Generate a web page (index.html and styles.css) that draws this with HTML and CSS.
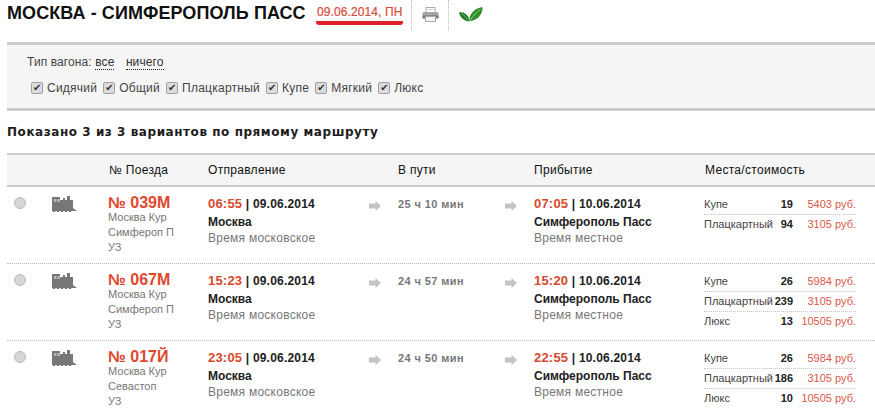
FILE: index.html
```html
<!DOCTYPE html>
<html lang="ru">
<head>
<meta charset="utf-8">
<title>Москва - Симферополь Пасс</title>
<link rel="stylesheet" href="styles.css">
</head>
<body>
<header class="head">
  <h1 class="title">МОСКВА - СИМФЕРОПОЛЬ ПАСС</h1>
  <span class="date">09.06.2014, ПН</span>
  <span class="tool tool-print">
    <svg width="17" height="15" viewBox="0 0 17 15"><rect x="4" y="0.5" width="9" height="5" fill="#fff" stroke="#aaa"/><path d="M5.500 2.500h6" stroke="#ccc"/><rect x="0.500" y="5" width="16" height="6" rx="1.500" fill="#a5a5a5"/><rect x="0.500" y="8.500" width="16" height="3" fill="#777"/><rect x="3.500" y="9.500" width="10" height="5" fill="#f4f4f4" stroke="#aaa"/></svg>
  </span>
  <span class="tool tool-leaf">
    <svg width="24" height="15" viewBox="0 0 24 15"><path d="M10.500 14.500C6 14.500 1 11 0 5.500 5 4.500 10 8 10.500 14.500Z" fill="#1f7d22"/><path d="M10.500 14C10 7 15 1.500 23.500 0 24 7 18 14 10.500 14Z" fill="#2c8f2b"/><path d="M11.500 13C14 8.500 17.500 5 21.500 2.500" stroke="#a5d98f" fill="none" stroke-width="0.800"/><path d="M9.500 13.500C7.500 10.500 5 8 2.500 6.800" stroke="#8fca7c" fill="none" stroke-width="0.700"/></svg>
  </span>
</header>

<section class="filter">
  <div class="filter-line">Тип вагона: <a class="dotted">все</a> <a class="dotted second">ничего</a></div>
  <div class="checks">
    <label class="check"><input type="checkbox" checked>Сидячий</label>
    <label class="check"><input type="checkbox" checked>Общий</label>
    <label class="check"><input type="checkbox" checked>Плацкартный</label>
    <label class="check"><input type="checkbox" checked>Купе</label>
    <label class="check"><input type="checkbox" checked>Мягкий</label>
    <label class="check"><input type="checkbox" checked>Люкс</label>
  </div>
</section>

<h2 class="shown">Показано 3 из 3 вариантов по прямому маршруту</h2>

<section class="table">
  <div class="row thead">
    <div></div><div></div>
    <div class="th-train">№ Поезда</div>
    <div>Отправление</div>
    <div></div>
    <div>В пути</div>
    <div></div>
    <div>Прибытие</div>
    <div class="th-seats">Места/стоимость</div>
  </div>

  <div class="row item">
    <div><span class="radio"></span></div>
    <div><svg class="loco" viewBox="0 0 26 16"><use href="#loco"/></svg></div>
    <div class="train"><div class="num">№ 039М</div><div>Москва Кур</div><div>Симфероп П</div><div>УЗ</div></div>
    <div class="point"><div class="when"><b>06:55</b> | 09.06.2014</div><div class="place">Москва</div><div class="tz">Время московское</div></div>
    <div><span class="arrow"></span></div>
    <div class="dur">25 ч 10 мин</div>
    <div><span class="arrow"></span></div>
    <div class="point"><div class="when"><b>07:05</b> | 10.06.2014</div><div class="place">Симферополь Пасс</div><div class="tz">Время местное</div></div>
    <div class="seats">
      <div class="seat"><span>Купе</span><b>19</b><i>5403 руб.</i></div>
      <div class="seat"><span>Плацкартный</span><b>94</b><i>3105 руб.</i></div>
    </div>
  </div>

  <div class="row item">
    <div><span class="radio"></span></div>
    <div><svg class="loco" viewBox="0 0 26 16"><use href="#loco"/></svg></div>
    <div class="train"><div class="num">№ 067М</div><div>Москва Кур</div><div>Симфероп П</div><div>УЗ</div></div>
    <div class="point"><div class="when"><b>15:23</b> | 09.06.2014</div><div class="place">Москва</div><div class="tz">Время московское</div></div>
    <div><span class="arrow"></span></div>
    <div class="dur">24 ч 57 мин</div>
    <div><span class="arrow"></span></div>
    <div class="point"><div class="when"><b>15:20</b> | 10.06.2014</div><div class="place">Симферополь Пасс</div><div class="tz">Время местное</div></div>
    <div class="seats">
      <div class="seat"><span>Купе</span><b>26</b><i>5984 руб.</i></div>
      <div class="seat"><span>Плацкартный</span><b>239</b><i>3105 руб.</i></div>
      <div class="seat"><span>Люкс</span><b>13</b><i>10505 руб.</i></div>
    </div>
  </div>

  <div class="row item">
    <div><span class="radio"></span></div>
    <div><svg class="loco" viewBox="0 0 26 16"><use href="#loco"/></svg></div>
    <div class="train"><div class="num">№ 017Й</div><div>Москва Кур</div><div>Севастоп</div><div>УЗ</div></div>
    <div class="point"><div class="when"><b>23:05</b> | 09.06.2014</div><div class="place">Москва</div><div class="tz">Время московское</div></div>
    <div><span class="arrow"></span></div>
    <div class="dur">24 ч 50 мин</div>
    <div><span class="arrow"></span></div>
    <div class="point"><div class="when"><b>22:55</b> | 10.06.2014</div><div class="place">Симферополь Пасс</div><div class="tz">Время местное</div></div>
    <div class="seats">
      <div class="seat"><span>Купе</span><b>26</b><i>5984 руб.</i></div>
      <div class="seat"><span>Плацкартный</span><b>186</b><i>3105 руб.</i></div>
      <div class="seat"><span>Люкс</span><b>10</b><i>10505 руб.</i></div>
    </div>
  </div>
</section>

<svg class="defs" width="0" height="0">
  <symbol id="loco" viewBox="0 0 26 16">
    <path d="M0 1h8v3h3V2h2v2h2V0h3v4h3v8l4 3H0Z" fill="#777"/>
    <path d="M2 3h2.500v3H2ZM5.500 3H8v3H5.500Z" fill="#b5b5b5"/>
    <path d="M2 12v4M6 12v4M10 12v4M14 12v4M18 12v4" stroke="#777" stroke-width="2.400"/>
  </symbol>
</svg>
</body>
</html>
```
FILE: styles.css
```css
html, body {
  margin: 0;
  padding: 0;
  background: #fff;
}
body {
  width: 875px;
  height: 415px;
  overflow: hidden;
  padding-left: 7px;
  box-sizing: border-box;
  font-family: "Liberation Sans", Arial, sans-serif;
  font-size: 12px;
  color: #222;
}
.head {
  display: flex;
  align-items: flex-start;
  height: 42px;
}
.title {
  margin: 0;
  padding-top: 3px;
  width: 309px;
  flex: none;
  font-size: 18px;
  line-height: 20px;
  font-weight: bold;
  letter-spacing: 0.08px;
  color: #111;
  white-space: nowrap;
}
.date {
  width: 87px;
  flex: none;
  height: 25px;
  box-sizing: border-box;
  padding: 5px 0 0 1px;
  font-size: 12px;
  line-height: 14px;
  letter-spacing: 0.1px;
  color: #d84a3a;
  -webkit-text-stroke: 0.2px #d84a3a;
  border-bottom: 4px solid #e01f2d;
  border-radius: 3px;
  white-space: nowrap;
}
.tool {
  flex: none;
  height: 30px;
  display: flex;
  justify-content: center;
  align-items: flex-start;
  border-left: 1px dotted #bbb;
  padding-top: 7px;
  box-sizing: border-box;
}
.tool-print { width: 37px; margin-left: 8px; }
.tool-leaf { width: 44px; }
.filter {
  margin: 0;
  height: 69px;
  box-sizing: border-box;
  border-top: 3px solid #ccc;
  border-bottom: 3px solid #ccc;
  background: #f5f5f5;
  padding: 9px 0 0 20px;
  color: #444;
  letter-spacing: 0.25px;
}
.filter-line {
  line-height: 16px;
  letter-spacing: 0.1px;
}
.dotted {
  color: #333;
  border-bottom: 1px dotted #222;
}
.second { margin-left: 8px; }
.checks {
  display: flex;
  gap: 6px;
  margin-top: 11px;
  padding-left: 4px;
}
.check {
  display: flex;
  align-items: center;
  gap: 4px;
  line-height: 14px;
  white-space: nowrap;
}
.check input {
  appearance: none;
  -webkit-appearance: none;
  margin: 0;
  width: 12px;
  height: 12px;
  border: 1px solid #a0a0a0;
  border-radius: 2px;
  background: #dcdcdc;
  position: relative;
}
.check input::before {
  content: "✔";
  position: absolute;
  left: 1px;
  top: -1px;
  font-family: "DejaVu Sans", sans-serif;
  font-size: 10px;
  line-height: 12px;
  color: #333;
}
.shown {
  margin: 14px 0 0;
  height: 28px;
  font-family: "DejaVu Sans", sans-serif;
  font-size: 12px;
  line-height: 15px;
  font-weight: bold;
  letter-spacing: 0.55px;
  color: #1c1c1c;
  white-space: nowrap;
}
.row {
  display: grid;
  grid-template-columns: 45px 56px 100px 161px 29px 107px 29px 170px 1fr;
}
.thead {
  height: 34px;
  box-sizing: border-box;
  border-top: 2px solid #ccc;
  border-bottom: 2px solid #ccc;
  background: #f5f5f5;
  line-height: 30px;
  color: #111;
  letter-spacing: 0.3px;
}
.th-train { padding-left: 1px; }
.th-seats { padding-left: 1px; }
.item {
  height: 77px;
  box-sizing: border-box;
  border-bottom: 1px dotted #bbb;
  padding-top: 8px;
}
.item:last-child { border-bottom: 0; }
.radio {
  display: block;
  width: 12px;
  height: 12px;
  margin: 2px 0 0 7px;
  border-radius: 50%;
  border: 1px solid #bbb;
  box-sizing: border-box;
  background: #d6d6d6;
}
.loco {
  display: block;
  width: 26px;
  height: 16px;
  margin-top: 1px;
}
.defs { position: absolute; }
.train {
  color: #777;
  font-size: 11px;
  line-height: 15px;
}
.num {
  font-size: 16px;
  line-height: 15px;
  font-weight: bold;
  color: #e0482e;
}
.point { line-height: 15px; }
.when {
  font-weight: bold;
  color: #222;
  font-size: 12px;
  line-height: 18px;
  letter-spacing: 0.2px;
}
.when b {
  color: #d9482e;
  font-size: 13px;
}
.place {
  font-weight: bold;
  color: #222;
  line-height: 18px;
}
.tz { color: #777; letter-spacing: 0.25px; }
.arrow {
  display: block;
  margin-top: 6px;
  width: 12px;
  height: 10px;
  background: #c4c4c4;
  clip-path: polygon(0 25%, 55% 25%, 55% 0, 100% 50%, 55% 100%, 55% 75%, 0 75%);
}
.dur {
  margin-top: 1px;
  color: #777;
  font-weight: bold;
  font-size: 11px;
  line-height: 16px;
  letter-spacing: 0.4px;
}
.seats {
  width: 152px;
  font-size: 11px;
  color: #444;
}
.seat {
  display: grid;
  grid-template-columns: 69px 20px 1fr;
  height: 20px;
  box-sizing: border-box;
  line-height: 19px;
  border-bottom: 1px dotted #c4c4c4;
  white-space: nowrap;
}
.seat:last-child { border-bottom: 0; }
.seat b {
  text-align: right;
  color: #222;
}
.seat i {
  text-align: right;
  font-style: normal;
  color: #d9594a;
}
```
